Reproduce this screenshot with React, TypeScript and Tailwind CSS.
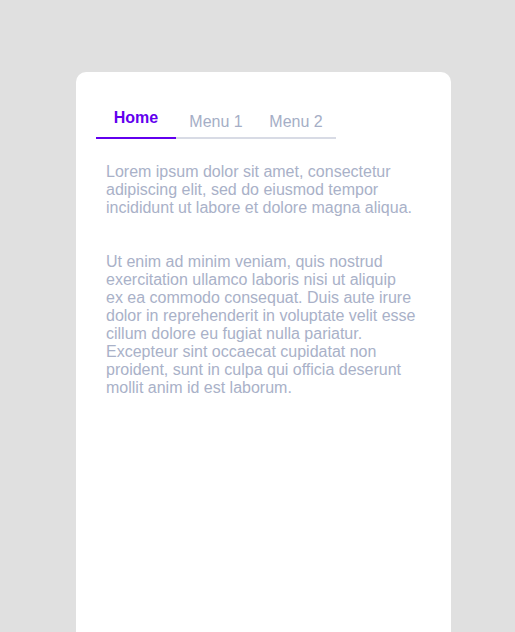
import React from "react";

export default function App() {
  const tabs = ["Home", "Menu 1", "Menu 2"];
  return (
    <div
      className="h-[632px] w-full overflow-hidden bg-[#e0e0e0] pt-[72px] pl-[76px]"
      style={{ fontFamily: '"Liberation Sans", Arial, Helvetica, sans-serif' }}
    >
      <div className="w-[375px] h-[600px] rounded-[10px] bg-white pt-[37px] px-[20px]">
        <div className="flex items-end w-[240px] border-b-2 border-[#d8dbe5]">
          {tabs.map((t, i) => (
            <div
              key={t}
              className={
                i === 0
                  ? "w-[80px] text-center text-[16px] leading-[18px] font-bold text-[#6200ee] pb-[10px] -mb-[2px] border-b-2 border-[#6200ee]"
                  : "w-[80px] text-center text-[16px] leading-[18px] text-[#a5aec6] pb-[6px]"
              }
            >
              {t}
            </div>
          ))}
        </div>
        <div className="pl-[10px] pt-[24px] text-[16px] leading-[18px] text-[#a9b1c8]">
          <div className="w-[310.6px]">
            <p>
              Lorem ipsum dolor sit amet, consectetur adipiscing elit, sed do eiusmod tempor incididunt ut labore et dolore magna aliqua.
            </p>
            <p className="mt-[36px]">
              Ut enim ad minim veniam, quis nostrud exercitation ullamco laboris nisi ut aliquip ex ea commodo consequat. Duis aute irure dolor in reprehenderit in voluptate velit esse cillum dolore eu fugiat nulla pariatur. Excepteur sint occaecat cupidatat non proident, sunt in culpa qui officia deserunt mollit anim id est laborum.
            </p>
          </div>
        </div>
      </div>
    </div>
  );
}
